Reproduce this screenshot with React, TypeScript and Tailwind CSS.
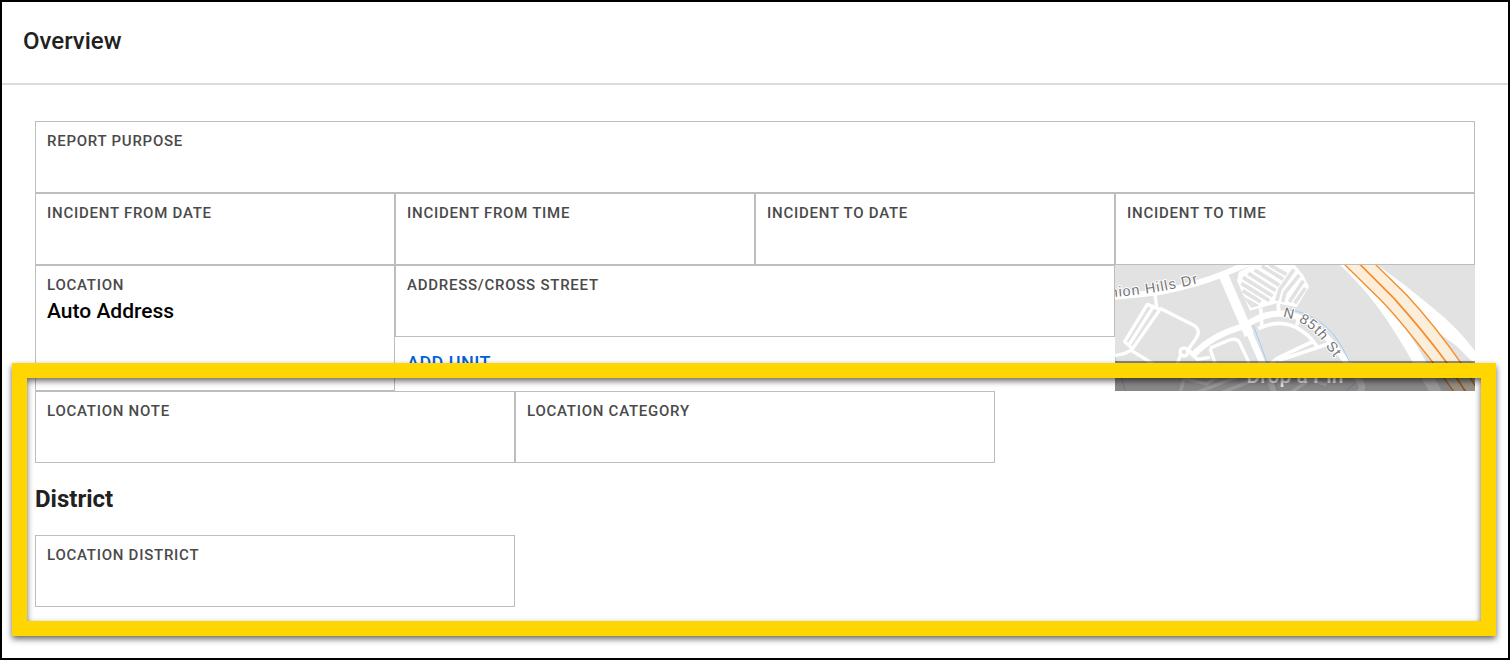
import React from "react";

function Field({ id, label, value = "", className = "" }: {
  id: string;
  label: string;
  value?: string;
  className?: string;
}) {
  return (
    <div className={`flex flex-col border border-[#bdbdbd] px-[11px] pt-[9px] ${className}`}>
      <label htmlFor={id} className="text-[15px] font-medium leading-5 tracking-wider text-[#4a4a4a]">
        {label}
      </label>
      <input
        id={id}
        defaultValue={value}
        className="h-8 w-full bg-transparent text-[21px] font-medium text-black outline-none"
      />
    </div>
  );
}

function StreetMap() {
  return (
    <svg
      viewBox="0 0 360 126"
      preserveAspectRatio="xMidYMid slice"
      className="block h-full w-full"
      role="img"
      aria-label="Map"
    >
      <rect width="360" height="126" fill="#e2e2e2" />
      <g transform="translate(-5 -5) scale(0.33333)" fill="none" stroke="#fff" strokeLinejoin="round">
        {/* surface streets */}
        <path d="M0 112 C60 104 120 102 160 94 C220 82 290 62 340 42 L430 4" strokeWidth="18" />
        <path d="M337 38 L418 225" strokeWidth="29" />
        <path d="M412 205 L462 320 L500 410" strokeWidth="19" />
        <path d="M245 290 C295 235 350 212 405 198 C440 172 480 156 530 162 C590 172 640 215 675 262 L725 325 Q745 355 755 375 Q760 390 740 405" strokeWidth="19" />
        <path d="M445 206 C495 182 540 188 575 212 Q605 232 622 262" strokeWidth="11" />
        <path d="M452 145 L456 205 M505 130 L506 165 M570 165 L560 195 M660 250 L505 302 M612 243 L520 286 Q490 300 480 315" strokeWidth="11" />

        {/* left parking lot */}
        <g strokeWidth="10">
          <path d="M133 90 L140 140 M150 148 L112 133 L44 245 L68 266 Z M130 140 L57 255 M65 270 L45 280 L10 288 M65 272 L130 312" />
          <path d="M150 145 L250 195 Q275 210 258 235 L235 268 L262 298 L300 292 M212 285 L198 320" />
          <circle cx="222" cy="276" r="12" fill="#e2e2e2" />
          <path d="M300 265 L358 240 Q382 232 390 250 L418 310 M300 265 L328 345 L290 372 L222 355 L210 400" />
          <path d="M255 400 L420 335 M330 400 L450 352 M560 345 L650 375 M540 400 L640 330" />
        </g>

        {/* upper parking lot */}
        <path
          d="M435 10 L387 36 L381 62 L420 152 L500 130 L560 142 L597 80 L580 46 L545 4 Z"
          fill="#fff"
          stroke="none"
        />
        <g stroke="#e2e2e2" strokeWidth="11">
          <path d="M402 112 L424 142 L446 136 Z" fill="#e2e2e2" strokeWidth="3" />
          <path d="M455 18 L520 58 M434 30 L508 76 M415 40 L497 92 M399 52 L488 108 M394 70 L478 122 M398 92 L452 126" />
          <path d="M478 14 L530 44 M552 28 L510 88 L500 122 M568 45 L525 98 L518 126 M580 62 L538 126 M586 84 L554 130" />
        </g>

        {/* canals */}
        <g stroke="#9fcdf5" strokeWidth="3">
          <path d="M430 195 L470 305 L505 400 M15 290 L48 400 M540 150 C600 158 640 190 670 222 Q700 262 722 312 M700 400 L735 370" />
        </g>

        {/* freeway and ramps */}
        <g transform="translate(540 0)" stroke="none">
          <path d="M145 10 C215 75 270 145 310 210 C340 255 385 335 420 400 L458 400 C430 340 370 235 330 180 L165 10 Z" fill="#fff" />
          <path d="M255 10 L340 72 L430 145 Q510 210 560 280 V318 L500 258 L420 200 Z" fill="#fff" />
          <path d="M160 10 L260 108 C320 165 370 235 427 305 L495 400 H570 L510 305 C465 240 410 170 350 105 L253 10 Z" fill="#fbeedb" />
          <g fill="none" stroke="#f68b27" strokeWidth="4">
            <path d="M160 10 L260 108 C320 165 370 235 427 305 L495 400" />
            <path d="M207 10 L310 113 C370 180 420 240 468 305 L530 400" strokeWidth="5" />
            <path d="M253 10 L350 105 C410 170 465 240 510 305 L570 400" />
          </g>
        </g>

        {/* street names */}
        <path id="union-hills" d="M-34 113 C60 110 160 98 300 60" stroke="none" />
        <path id="n-85th" d="M518 171 C570 178 610 208 640 248 L690 316" stroke="none" />
        <g
          fill="#757575"
          stroke="#fff"
          strokeWidth="6"
          paintOrder="stroke"
          fontSize="43"
          letterSpacing="3"
          fontFamily="Liberation Sans, sans-serif"
        >
          <text><textPath href="#union-hills">Union Hills Dr</textPath></text>
          <text><textPath href="#n-85th">N 85th St</textPath></text>
        </g>
      </g>
    </svg>
  );
}

export default function App() {
  return (
    <div className="min-h-screen border-2 border-black bg-white font-['Roboto',sans-serif]">
      <header className="border-b-2 border-[#dcdcdc] px-[21px] pb-[27px] pt-6">
        <h1 className="text-2xl font-medium leading-[30px] text-[#212121]">Overview</h1>
      </header>
      <main className="px-[33px] pt-9">
        <div className="grid grid-cols-12">
          <Field id="purpose" label="REPORT PURPOSE" className="col-span-12 h-[72px]" />
          <Field id="from-date" label="INCIDENT FROM DATE" className="col-span-3 h-[72px]" />
          <Field id="from-time" label="INCIDENT FROM TIME" className="col-span-3 h-[72px]" />
          <Field id="to-date" label="INCIDENT TO DATE" className="col-span-3 h-[72px]" />
          <Field id="to-time" label="INCIDENT TO TIME" className="col-span-3 h-[72px]" />
          <Field id="location" label="LOCATION" value="Auto Address" className="col-span-3 h-[126px]" />
          <div className="col-span-6">
            <Field id="address" label="ADDRESS/CROSS STREET" className="h-[72px]" />
            <button type="button" className="px-3 pt-[14px] text-lg font-medium leading-6 tracking-wide text-[#0061d9]">
              ADD UNIT
            </button>
          </div>
          <div className="relative col-span-3 h-[126px] overflow-hidden">
            <StreetMap />
            <button
              type="button"
              className="absolute inset-x-0 bottom-0 h-[30px] bg-black/40 text-[21px] font-medium leading-[30px] text-white/80"
            >
              Drop a Pin
            </button>
          </div>
        </div>
        <section className="relative">
          <div className="grid grid-cols-12">
            <Field id="note" label="LOCATION NOTE" className="col-span-4 h-[72px]" />
            <Field id="category" label="LOCATION CATEGORY" className="col-span-4 h-[72px]" />
          </div>
          <h2 className="py-5 text-2xl font-bold text-[#212121]">District</h2>
          <div className="grid grid-cols-12">
            <Field id="district" label="LOCATION DISTRICT" className="col-span-4 h-[72px]" />
          </div>
          <div className="pointer-events-none absolute -bottom-[29px] -left-[23px] -right-[21px] -top-7 border-[15px] border-[#ffd600] drop-shadow-[0_3px_3px_rgba(0,0,0,0.6)]" />
        </section>
      </main>
    </div>
  );
}
